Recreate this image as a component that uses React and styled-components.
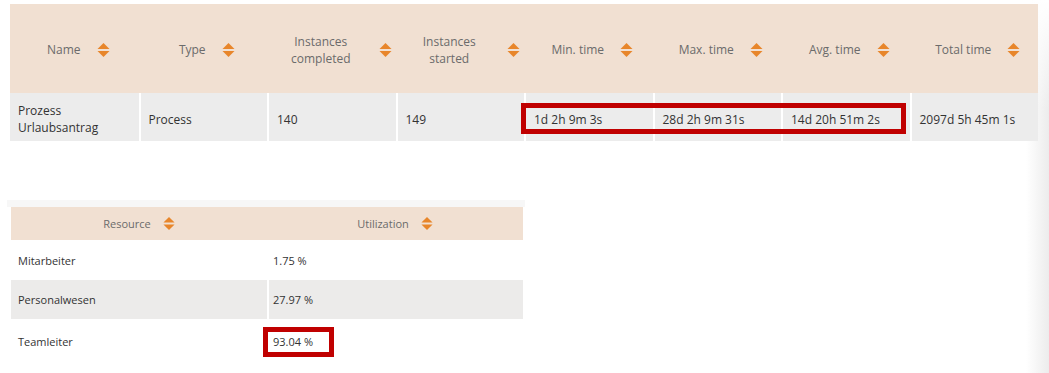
import React from 'react'
import styled, {createGlobalStyle} from 'styled-components'

const GlobalStyle = createGlobalStyle`
  html, body {
    margin: 0;
    padding: 0;
    background: #fff;
  }
  body {
    font-family: "Open Sans", "Noto Sans", "Liberation Sans", sans-serif;
  }
`

const processColumns = ['Name', 'Type', 'Instances completed', 'Instances started', 'Min. time', 'Max. time', 'Avg. time', 'Total time']

const processRow = ['Prozess Urlaubsantrag', 'Process', '140', '149', '1d 2h 9m 3s', '28d 2h 9m 31s', '14d 20h 51m 2s', '2097d 5h 45m 1s']

const resources = [
  {name: 'Mitarbeiter', value: '1.75 %', height: 40},
  {name: 'Personalwesen', value: '27.97 %', height: 39, shaded: true},
  {name: 'Teamleiter', value: '93.04 %', height: 44, marked: true},
]

const SortIcon = ({className}) => (
  <svg className={className} width="12" height="14" viewBox="0 0 12 14">
    <polygon points="6,0 12,6 0,6" fill="#e8862b" />
    <polygon points="0,8 12,8 6,14" fill="#e8862b" />
  </svg>
)

const App = () => {
  return (
    <Page>
      <GlobalStyle />
      <ProcessTable>
        <HeadRow>
          {processColumns.map(col => (
            <HeadCell key={col}>
              <Label>{col}</Label>
              <Sort />
            </HeadCell>
          ))}
        </HeadRow>
        <BodyRow>
          {processRow.map((val, i) => (
            <BodyCell key={i}>{val}</BodyCell>
          ))}
          <TimeMark />
        </BodyRow>
      </ProcessTable>

      <Panel>
        <ResourceTable>
          <ResourceHead>
            Resource <SmallSort />
          </ResourceHead>
          <ResourceHead>
            Utilization <SmallSort />
          </ResourceHead>
          {resources.map(r => (
            <ResourceRow key={r.name} $shaded={r.shaded} style={{height: r.height}}>
              <ResourceCell>{r.name}</ResourceCell>
              <ResourceCell>{r.value}</ResourceCell>
              {r.marked && <UtilMark />}
            </ResourceRow>
          ))}
        </ResourceTable>
      </Panel>
    </Page>
  )
}

export default App

const Page = styled.div`
  box-sizing: border-box;
  width: 1049px;
  height: 373px;
  padding: 4px 0 0 10px;
  overflow: hidden;
  background:
    linear-gradient(to bottom, #fff 0, rgba(255, 255, 255, 0) 110px),
    linear-gradient(to right, #fff 1026px, #ececec 1049px);
`

const ProcessTable = styled.div`
  width: 1028px;
`

const HeadRow = styled.div`
  display: grid;
  grid-template-columns: repeat(8, 1fr);
  height: 89px;
  background: #f1e0d2;
`

const HeadCell = styled.div`
  display: flex;
  align-items: center;
  justify-content: center;
  gap: 16px;
  min-width: 0;
  padding: 2px 4px 0 12px;
  color: #6b6b6b;
  font-size: 12px;
  line-height: 17px;
`

const Label = styled.span`
  flex: 0 1 auto;
  text-align: center;
`

const Sort = styled(SortIcon)`
  flex: 0 0 auto;
  width: 13px;
  height: 14px;
`

const BodyRow = styled.div`
  position: relative;
  display: grid;
  grid-template-columns: repeat(8, 1fr);
  height: 48px;
`

const BodyCell = styled.div`
  display: flex;
  align-items: center;
  min-width: 0;
  padding: 4px 8px 0;
  background: #ececec;
  color: #333;
  font-size: 12px;
  line-height: 17px;

  & + & {
    border-left: 2px solid #fff;
  }
`

const TimeMark = styled.div`
  position: absolute;
  top: 10px;
  left: calc(50% - 3px);
  width: calc(37.5% - 1px);
  height: 31px;
  box-sizing: border-box;
  border: 5px solid #c00000;
`

const Panel = styled.div`
  width: 518px;
  margin: 59px 0 0 -3px;
  padding: 7px 2px 0 4px;
  box-sizing: border-box;
  background: linear-gradient(to bottom, #f7f7f7 0, #f7f7f7 7px, transparent 7px);
`

const ResourceTable = styled.div`
  display: grid;
  grid-template-columns: 1fr 1fr;
  width: 512px;
`

const ResourceHead = styled.div`
  display: flex;
  align-items: center;
  justify-content: center;
  gap: 12px;
  height: 33px;
  background: #f1e0d2;
  color: #6b6b6b;
  font-size: 11px;
`

const SmallSort = styled(SortIcon)`
  width: 12px;
  height: 13px;
`

const ResourceRow = styled.div`
  position: relative;
  grid-column: 1 / 3;
  display: grid;
  grid-template-columns: 1fr 1fr;
  background: ${p => (p.$shaded ? '#ecebea' : '#fff')};
`

const ResourceCell = styled.div`
  display: flex;
  align-items: center;
  padding-left: 7px;
  color: #333;
  font-size: 11px;

  & + & {
    border-left: 2px solid #fff;
    padding-left: 4px;
  }
`

const UtilMark = styled.div`
  position: absolute;
  top: 8px;
  left: calc(50% - 4px);
  width: 71px;
  height: 30px;
  box-sizing: border-box;
  border: 5px solid #c00000;
`
